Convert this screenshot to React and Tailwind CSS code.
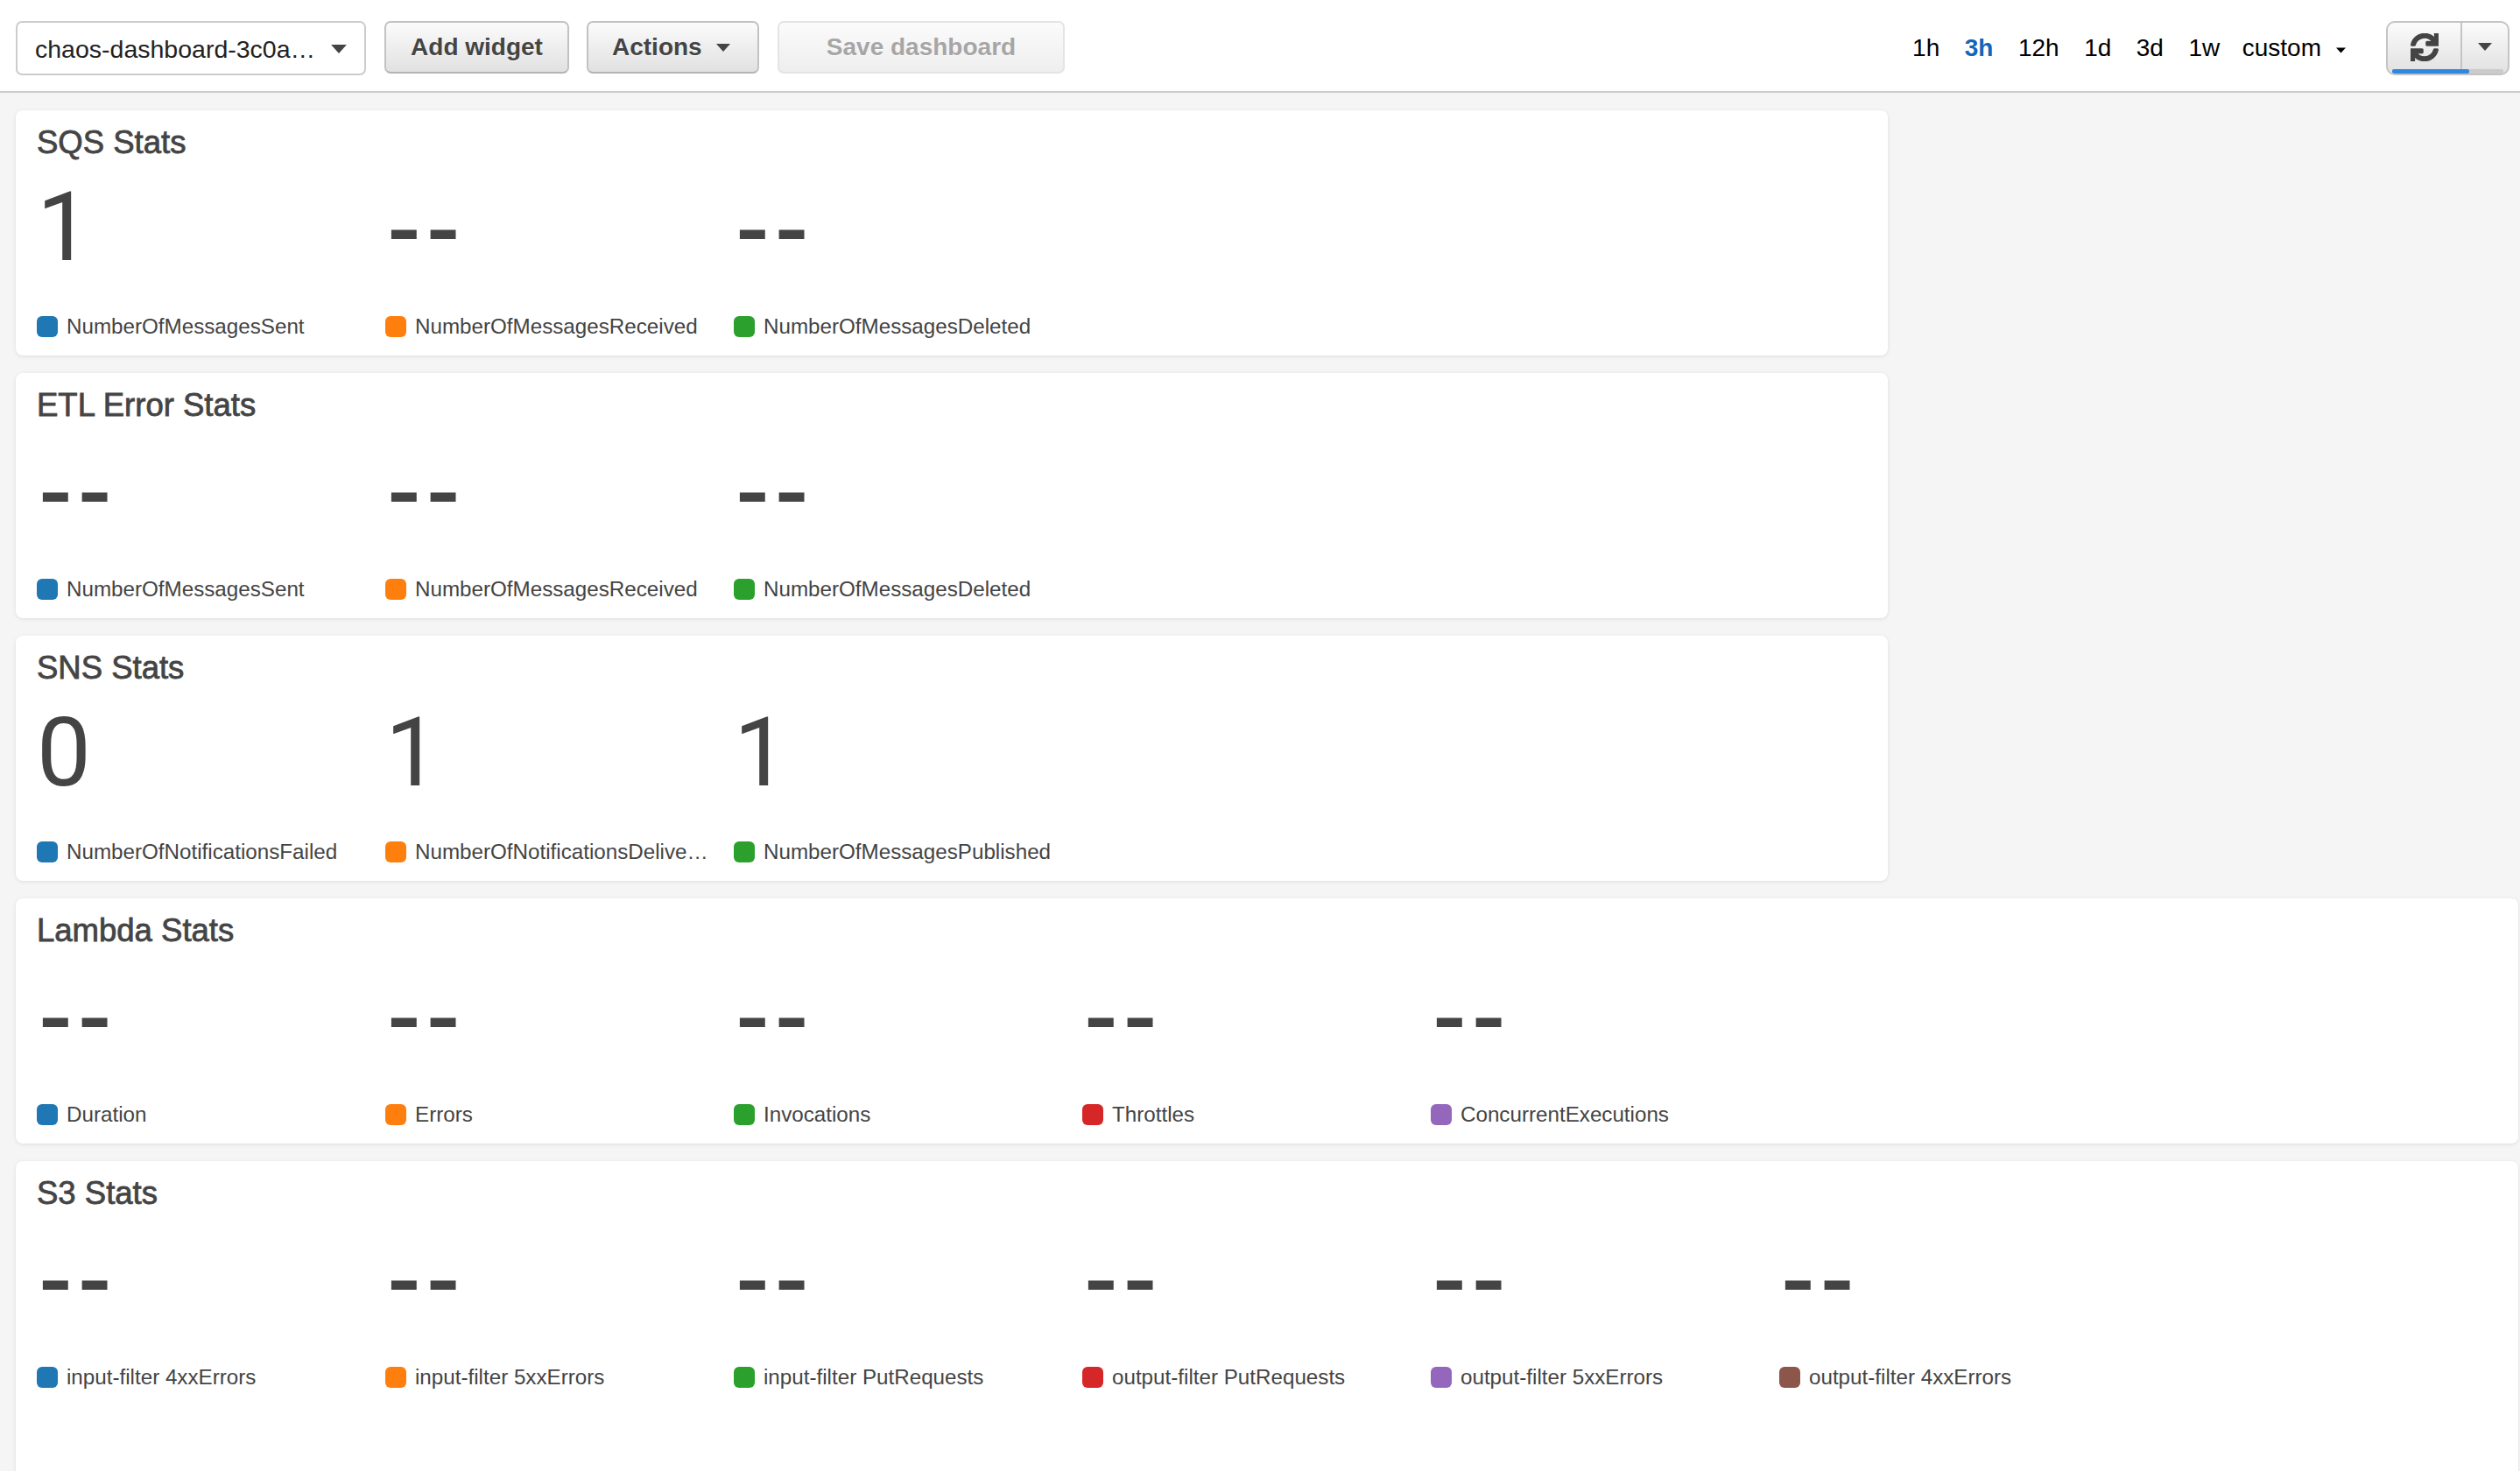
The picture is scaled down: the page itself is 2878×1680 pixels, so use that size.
import { FaSync } from 'react-icons/fa';

const BLUE = '#1f77b4';
const ORANGE = '#ff7f0e';
const GREEN = '#2ca02c';
const RED = '#d62728';
const PURPLE = '#9467bd';
const BROWN = '#8c564b';

const MESSAGE_METRICS = [
  { label: 'NumberOfMessagesSent', color: BLUE },
  { label: 'NumberOfMessagesReceived', color: ORANGE },
  { label: 'NumberOfMessagesDeleted', color: GREEN },
];

const WIDGETS = [
  {
    title: 'SQS Stats',
    narrow: true,
    metrics: [{ ...MESSAGE_METRICS[0], value: '1' }, MESSAGE_METRICS[1], MESSAGE_METRICS[2]],
  },
  { title: 'ETL Error Stats', narrow: true, metrics: MESSAGE_METRICS },
  {
    title: 'SNS Stats',
    narrow: true,
    metrics: [
      { label: 'NumberOfNotificationsFailed', color: BLUE, value: '0' },
      { label: 'NumberOfNotificationsDelive…', color: ORANGE, value: '1' },
      { label: 'NumberOfMessagesPublished', color: GREEN, value: '1' },
    ],
  },
  {
    title: 'Lambda Stats',
    metrics: [
      { label: 'Duration', color: BLUE },
      { label: 'Errors', color: ORANGE },
      { label: 'Invocations', color: GREEN },
      { label: 'Throttles', color: RED },
      { label: 'ConcurrentExecutions', color: PURPLE },
    ],
  },
  {
    title: 'S3 Stats',
    tall: true,
    metrics: [
      { label: 'input-filter 4xxErrors', color: BLUE },
      { label: 'input-filter 5xxErrors', color: ORANGE },
      { label: 'input-filter PutRequests', color: GREEN },
      { label: 'output-filter PutRequests', color: RED },
      { label: 'output-filter 5xxErrors', color: PURPLE },
      { label: 'output-filter 4xxErrors', color: BROWN },
    ],
  },
];

const RANGES = ['1h', '3h', '12h', '1d', '3d', '1w'];

const Caret = ({ className }) => (
  <svg viewBox="0 0 16 9" className={className} fill="currentColor">
    <polygon points="0,0 16,0 8,9" />
  </svg>
);

const buttonClass =
  'h-[60px] rounded-[7px] border-2 border-[#c2c2c2] border-b-[#b4b4b4] bg-linear-to-b from-[#fbfbfb] to-[#e1e1e1] text-[28px] font-bold text-[#444] [text-shadow:0_1px_0_#fff]';

const Toolbar = () => (
  <header className="flex h-[106px] items-start border-b-2 border-[#ccc] bg-white pl-[18px] pr-[12px] pt-[24px]">
    <div className="flex h-[62px] w-[400px] items-center rounded-[7px] border-2 border-[#ccc] bg-white pl-[20px] pr-[20px] pt-[2px] text-[28.5px] text-[#222]">
      <span className="min-w-0 flex-1 whitespace-nowrap">chaos-dashboard-3c0a…</span>
      <Caret className="h-[10px] w-[18px] shrink-0 text-[#444]" />
    </div>
    <button className={`${buttonClass} ml-[21px] w-[211px]`}>Add widget</button>
    <button className={`${buttonClass} ml-[20px] flex w-[197px] items-center pl-[27px]`}>
      Actions
      <Caret className="ml-[16px] h-[9px] w-[16px] text-[#444]" />
    </button>
    <button className="ml-[21px] h-[60px] w-[328px] rounded-[7px] border-2 border-[#e4e4e4] bg-linear-to-b from-[#fbfbfb] to-[#eeeeee] text-[28px] font-bold text-[#a6a6a6] [text-shadow:0_1px_0_#fff]">
      Save dashboard
    </button>

    <nav className="ml-auto flex h-[60px] items-center gap-[28.5px] pt-[2px] text-[28px] text-black">
      {RANGES.map((range) => (
        <span key={range} className={range === '3h' ? 'font-bold text-[#1166bb]' : ''}>
          {range}
        </span>
      ))}
      <span className="-ml-[3px] flex items-center">
        custom
        <Caret className="ml-[17px] mt-[4px] h-[7px] w-[11px] text-black" />
      </span>
    </nav>

    <div className="relative ml-[46px] flex h-[62px] w-[141px] overflow-hidden rounded-[10px] border-2 border-[#c4c4c4] bg-linear-to-b from-[#fbfbfb] to-[#e1e1e1] text-[#444]">
      <div className="flex h-[54px] w-[85px] items-center justify-center border-r-2 border-[#c4c4c4]">
        <FaSync className="mt-[2px] h-[32px] w-[32px]" stroke="currentColor" strokeWidth={24} />
      </div>
      <div className="flex h-[54px] flex-1 items-center justify-center">
        <Caret className="h-[9px] w-[16px]" />
      </div>
      {/* refresh countdown */}
      <div className="absolute bottom-0 left-[5px] right-[5px] h-[5px] rounded-t-[2px] bg-[#cbcbcb]">
        <div className="h-full w-[88px] rounded-[2px] bg-[#2f87df]" />
      </div>
    </div>
  </header>
);

const Metric = ({ label, color, value }) => (
  <div className="w-[398px] shrink-0 pr-[30px]">
    {value ? (
      <div className="h-[110px] pt-[1px] font-['Roboto',sans-serif] text-[110px] leading-[110px] text-[#444]">{value}</div>
    ) : (
      <div className="h-[110px] pl-[3px] text-[110px] leading-[110px] tracking-[8px] text-[#444] [-webkit-text-stroke:2px_#444]">--</div>
    )}
    <div className="mt-[47px] flex h-[24px] items-center text-[24.2px] text-[#444]">
      <span className="h-[24px] w-[24px] shrink-0 rounded-[6px]" style={{ backgroundColor: color }} />
      <span className="ml-[10px] min-w-0 whitespace-nowrap pt-[1px]">{label}</span>
    </div>
  </div>
);

const Widget = ({ title, metrics, narrow, tall }) => (
  <section
    className={`rounded-[8px] bg-white px-[24px] pt-[15px] shadow-[0_1px_4px_rgba(0,0,0,0.10)] ${
      narrow ? 'w-[2138px]' : 'w-full'
    } ${tall ? 'h-[420px]' : 'h-[280px]'}`}
  >
    <h2 className="h-[44px] text-[36.5px] leading-[44px] text-[#444] [-webkit-text-stroke:0.8px_#444]">{title}</h2>
    <div className="mt-[19px] flex">
      {metrics.map((metric) => (
        <Metric key={metric.label} {...metric} />
      ))}
    </div>
  </section>
);

export default function App() {
  return (
    <div className="h-[1680px] overflow-hidden bg-[#f5f5f5] font-['Liberation_Sans',Arial,sans-serif]">
      <Toolbar />
      <main className="flex flex-col gap-[20px] pl-[18px] pr-[2px] pt-[20px]">
        {WIDGETS.map((widget) => (
          <Widget key={widget.title} {...widget} />
        ))}
      </main>
    </div>
  );
}
